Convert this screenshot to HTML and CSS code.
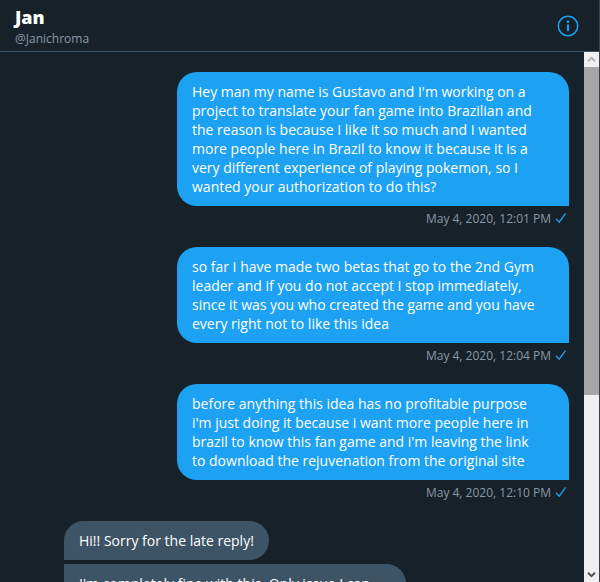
FILE: index.html
```html
<!DOCTYPE html>
<html lang="en">
<head>
    <meta charset="UTF-8">
    <meta name="viewport" content="width=device-width, initial-scale=1.0">
    <title>Jan</title>
    <link rel="stylesheet" href="styles.css">
</head>
<body>
    <div class="chat">
        <header class="header">
            <div class="user">
                <h1 class="name">Jan</h1>
                <p class="handle">@Janichroma</p>
            </div>
            <button class="info" type="button" aria-label="Conversation info">
                <svg viewBox="0 0 22 22" width="22" height="22" fill="none" stroke="currentColor">
                    <circle cx="11" cy="11" r="9.7" stroke-width="1.5"/>
                    <path d="M11 9.5v6.5" stroke-width="2"/>
                    <circle cx="11" cy="6.7" r="1.3" fill="currentColor" stroke="none"/>
                </svg>
            </button>
        </header>

        <div class="main">
            <div class="messages">
                <div class="message sent">
                    <p class="bubble">Hey man my name is Gustavo and I'm working on a<br>
                    project to translate your fan game into Brazilian and<br>
                    the reason is because I like it so much and I wanted<br>
                    more people here in Brazil to know it because it is a<br>
                    very different experience of playing pokemon, so I<br>
                    wanted your authorization to do this?</p>
                    <p class="time">May 4, 2020, 12:01 PM
                        <svg class="check" viewBox="0 0 12 12" width="12" height="12"><path d="M1 6.8l3.2 3.4L10.6 1.4"/></svg>
                    </p>
                </div>

                <div class="message sent">
                    <p class="bubble">so far I have made two betas that go to the 2nd Gym<br>
                    leader and if you do not accept I stop immediately,<br>
                    since it was you who created the game and you have<br>
                    every right not to like this idea</p>
                    <p class="time">May 4, 2020, 12:04 PM
                        <svg class="check" viewBox="0 0 12 12" width="12" height="12"><path d="M1 6.8l3.2 3.4L10.6 1.4"/></svg>
                    </p>
                </div>

                <div class="message sent">
                    <p class="bubble">before anything this idea has no profitable purpose<br>
                    i'm just doing it because i want more people here in<br>
                    brazil to know this fan game and i'm leaving the link<br>
                    to download the rejuvenation from the original site</p>
                    <p class="time">May 4, 2020, 12:10 PM
                        <svg class="check" viewBox="0 0 12 12" width="12" height="12"><path d="M1 6.8l3.2 3.4L10.6 1.4"/></svg>
                    </p>
                </div>

                <div class="message received">
                    <p class="bubble">Hi!! Sorry for the late reply!</p>
                    <p class="bubble long">I'm completely fine with this. Only issue I can</p>
                </div>
            </div>

            <div class="scrollbar">
                <button class="arrow up" type="button" aria-label="Scroll up">
                    <svg viewBox="0 0 9 7" width="9" height="7"><path d="M1 5.2l3.5-3.4L8 5.2"/></svg>
                </button>
                <div class="track"><div class="thumb"></div></div>
                <button class="arrow down" type="button" aria-label="Scroll down">
                    <svg viewBox="0 0 9 7" width="9" height="7"><path d="M1 1.8l3.5 3.4L8 1.8"/></svg>
                </button>
            </div>
        </div>
    </div>
</body>
</html>
```
FILE: styles.css
```css
*{
    padding: 0;
    margin: 0;
    box-sizing: border-box;
}
body{
    background-color: #17212a;
    color: #fff;
    font-family: "Open Sans", "Noto Sans", sans-serif;
    font-size: 14px;
    line-height: 19px;
}
button{
    border: none;
    background: none;
}
.chat{
    display: flex;
    flex-direction: column;
    height: 100vh;
    border-right: 1px solid #38444d;
    overflow: hidden;
}

/* header */
.header{
    display: flex;
    justify-content: space-between;
    align-items: flex-start;
    height: 52px;
    flex-shrink: 0;
    padding: 5px 20px 0 15px;
    border-bottom: 1px solid #3d5466;
}
.name{
    font-size: 18px;
    font-weight: 800;
    line-height: 24px;
}
.handle{
    color: #8899a6;
    font-size: 12px;
    line-height: 19px;
}
.info{
    display: flex;
    padding-top: 10px;
    color: #1da1f2;
}

/* messages */
.main{
    display: flex;
    flex: 1;
    min-height: 0;
}
.messages{
    flex: 1;
    padding: 20px 15px 0;
    overflow: hidden;
}
.message{
    display: flex;
    flex-direction: column;
    margin-bottom: 20px;
}
.bubble{
    padding: 10px 15px;
}
.sent{
    align-items: flex-end;
}
.sent .bubble{
    width: 392px;
    max-width: 100%;
    background-color: #1da1f2;
    border-radius: 20px 20px 0 20px;
    white-space: nowrap;
}
.time{
    display: flex;
    align-items: center;
    gap: 4px;
    margin-top: 5px;
    padding-right: 2px;
    color: #8899a6;
    font-size: 12px;
    line-height: 16px;
}
.check{
    fill: none;
    stroke: #1da1f2;
    stroke-width: 1.3;
    margin-bottom: 2px;
}
.received{
    align-items: flex-start;
    gap: 4px;
    padding-left: 49px;
}
.received .bubble{
    background-color: #3d5466;
    border-radius: 0 20px 20px 0;
}
.received .bubble:first-child{
    border-radius: 20px 20px 20px 0;
}
.received .long{
    width: 342px;
    max-width: 100%;
}

/* scrollbar */
.scrollbar{
    display: flex;
    flex-direction: column;
    width: 15px;
    background-color: #f0f0f0;
}
.arrow{
    display: flex;
    justify-content: center;
    align-items: center;
    height: 15px;
    fill: none;
    stroke-width: 2;
}
.up{
    stroke: #b4b4b4;
}
.down{
    stroke: #505050;
}
.track{
    flex: 1;
}
.thumb{
    height: 65.6%;
    background-color: #a6a6a6;
}
```
